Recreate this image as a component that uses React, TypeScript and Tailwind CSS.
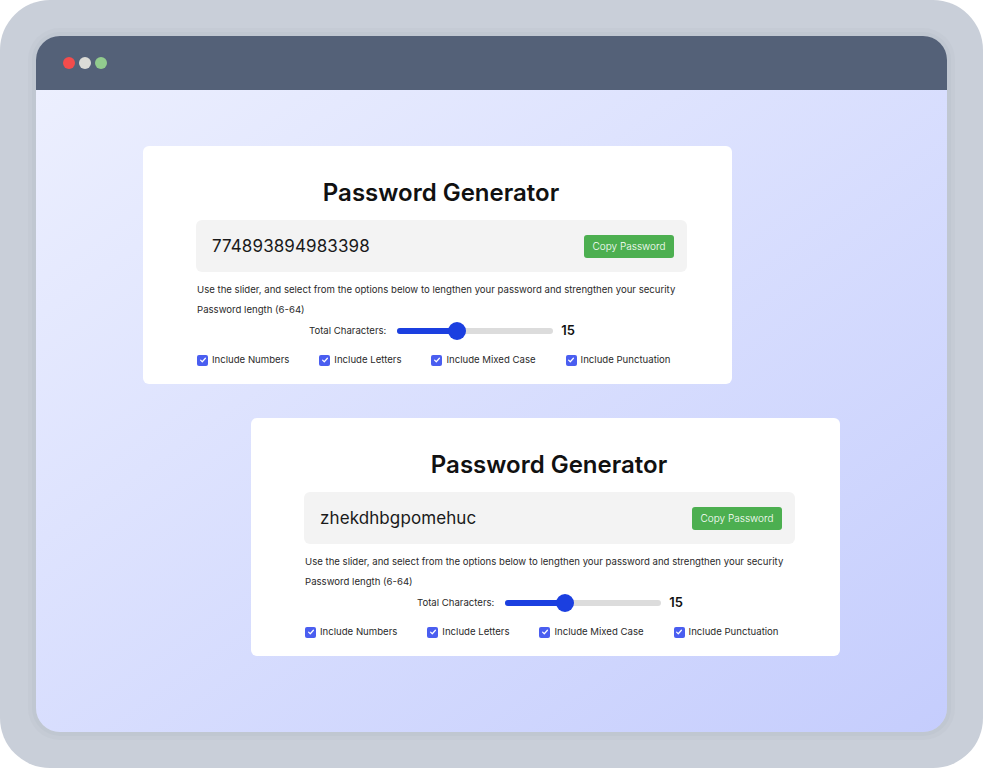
const options = ["Include Numbers", "Include Letters", "Include Mixed Case", "Include Punctuation"];

const Check = () => (
  <span className="w-[11px] h-[11px] rounded-[2px] bg-[#4a5ef0] flex items-center justify-center">
    <svg width="8" height="8" viewBox="0 0 10 10" fill="none">
      <path d="M2 5.2 4.1 7.2 8 2.8" stroke="white" strokeWidth="1.5" strokeLinecap="round" strokeLinejoin="round" />
    </svg>
  </span>
);

const GeneratorCard = ({ password, className }: { password: string; className: string }) => {
  return (
    <div className={`w-[589px] h-[238px] bg-white rounded-md pl-[53px] pt-[32px] ${className}`}>
      <div className="w-[491px] flex flex-col">
        <h2 className="text-[24px] font-semibold text-center text-[#111] leading-[30px] ml-[-1px]">
          Password Generator
        </h2>
        <div className="mt-[12px] h-[52px] bg-[#f3f3f3] rounded-md flex items-center justify-between pl-[16px] pr-[13px]">
          <span className="text-[17px] text-[#1a1a1a] tracking-[0.1px] mt-[2px]">{password}</span>
          <button className="h-[23px] w-[90px] bg-[#4caf50] rounded-[3px] text-white text-[10px] font-light">
            Copy Password
          </button>
        </div>
        <p className="mt-[11px] text-[9.6px] text-[#2a2a2a] leading-[14px] pl-[1px]">
          Use the slider, and select from the options below to lengthen your password and strengthen your security
        </p>
        <p className="mt-[6px] text-[9.6px] text-[#2a2a2a] leading-[14px] pl-[1px]">Password length (6-64)</p>
        <div className="mt-[5px] flex items-center justify-center gap-[11px] h-[18px] ml-[1px]">
          <span className="text-[9.6px] text-[#2a2a2a]">Total Characters:</span>
          <div className="relative w-[156px] h-[6px] rounded-full bg-[#dcdcdc]">
            <div className="absolute left-0 top-0 h-[6px] w-[62px] rounded-full bg-[#1b3fe0]" />
            <div className="absolute left-[51px] top-[-6px] w-[18px] h-[18px] rounded-full bg-[#1b3fe0]" />
          </div>
          <span className="text-[13px] font-semibold text-[#111] ml-[-3px]">15</span>
        </div>
        <div className="mt-[13px] flex items-center gap-[30px] pl-[1px]">
          {options.map((o) => (
            <label key={o} className="flex items-center gap-[4px] text-[9.6px] text-[#2a2a2a]">
              <Check />
              {o}
            </label>
          ))}
        </div>
      </div>
    </div>
  );
};

export default function App() {
  return (
    <div className="w-[983px] h-[768px] bg-white" style={{ fontFamily: "Inter, 'Noto Sans', sans-serif" }}>
      <div className="w-full h-full rounded-[50px] bg-[#c9cfd9] p-[36px]">
        <div className="w-full h-full rounded-[24px] overflow-hidden flex flex-col shadow-[0_0_0_4px_#c0c7d1,0_0_0_8px_#c5cbd5]">
          <div className="h-[54px] shrink-0 bg-[#546178] flex items-center gap-[4px] pl-[27px]">
            <span className="w-[12px] h-[12px] rounded-full bg-[#f44c4c]" />
            <span className="w-[12px] h-[12px] rounded-full bg-[#dcdcd7]" />
            <span className="w-[12px] h-[12px] rounded-full bg-[#92cc8e]" />
          </div>
          <div className="flex-1 bg-gradient-to-br from-[#eceffe] to-[#c5cdfd] pt-[56px] flex flex-col gap-[34px]">
            <GeneratorCard password="774893894983398" className="ml-[107px]" />
            <GeneratorCard password="zhekdhbgpomehuc" className="ml-[215px]" />
          </div>
        </div>
      </div>
    </div>
  );
}
